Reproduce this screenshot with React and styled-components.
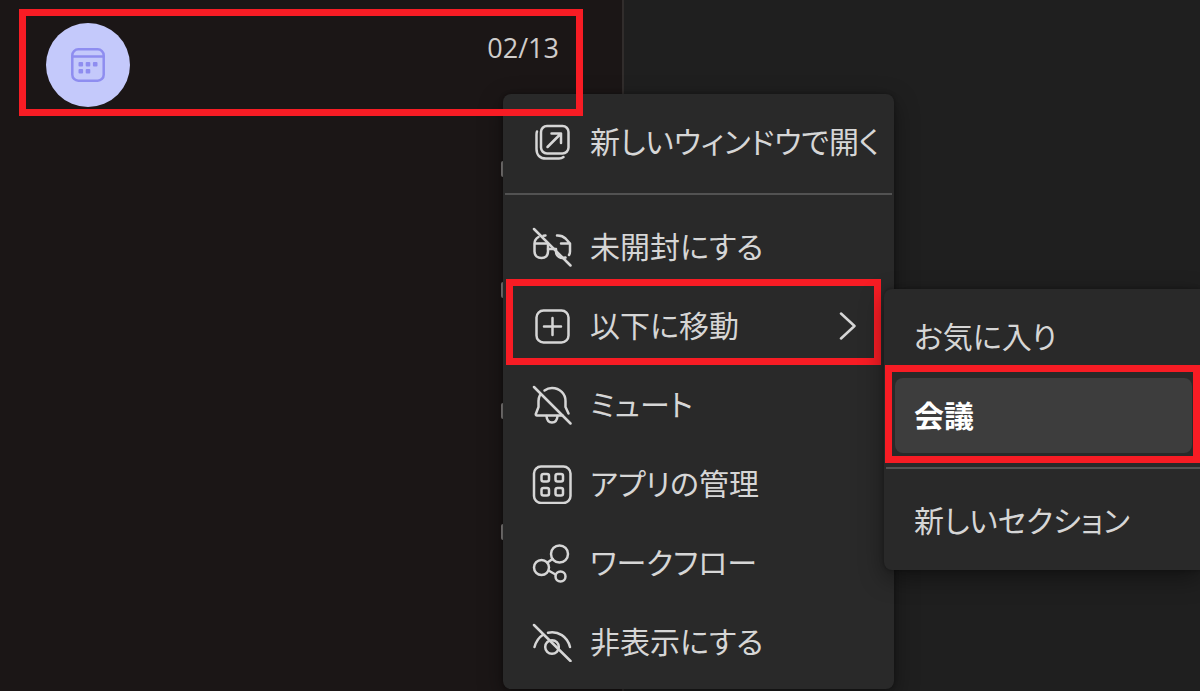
import React from 'react'
import styled, { createGlobalStyle } from 'styled-components'

const GlobalStyle = createGlobalStyle`
    * {
        box-sizing: border-box;
    }

    body {
        margin: 0;
        background-color: #1f1f1f;
        color: #d6d6d6;
        font-family: 'Noto Sans CJK JP', 'Noto Sans', sans-serif;
        font-feature-settings: 'palt';
        overflow: hidden;
    }
`

const Page = styled.main`
    position: relative;
    display: flex;
    min-height: 100vh;
`

const ChatPane = styled.section`
    width: 52%;
    padding: 9px 39px 0 19px;
    background-color: #1b1616;
    border-right: 2px solid #312d2c;
`

const ChatRow = styled.article`
    position: relative;
    z-index: 3;
    display: flex;
    justify-content: space-between;
    height: 107px;
    padding: 7px 17px 0 20px;
    border: 7px solid #f71c24;
    pointer-events: none;
`

const Avatar = styled.div`
    display: flex;
    align-items: center;
    justify-content: center;
    width: 84px;
    height: 84px;
    border-radius: 50%;
    background-color: #c4c9fb;
    color: #8e8df0;
`

const ChatDate = styled.time`
    margin-top: 7px;
    font-family: 'Open Sans', 'Noto Sans', sans-serif;
    font-size: 27px;
    line-height: 36px;
    color: #cfcccb;
`

const HiddenRows = styled.div`
    display: flex;
    flex-direction: column;
    gap: 105px;
    padding: 45px 0 0 482px;
`

const RowEdge = styled.span`
    width: 4px;
    height: 16px;
    border-radius: 2px;
    background-color: #8a8786;
`

const MenuList = styled.ul`
    margin: 0;
    list-style: none;
    background-color: #292929;
    box-shadow: 0 8px 24px rgba(0, 0, 0, 0.4), 0 0 4px rgba(0, 0, 0, 0.3);
`

const ContextMenu = styled(MenuList)`
    position: absolute;
    top: 94px;
    left: 503px;
    z-index: 2;
    width: 391px;
    padding: 8px 0;
    border-radius: 8px;
`

const SubMenu = styled(MenuList)`
    position: absolute;
    top: 3px;
    left: 381px;
    width: 316px;
    padding: 10px 0 12px;
    border-radius: 8px 0 0 8px;
`

const MenuEntry = styled.li`
    position: relative;
`

const Frame = styled.span`
    position: absolute;
    inset: ${props => props.$inset};
    border: 7px solid #f71c24;
    pointer-events: none;
`

const MenuButton = styled.button`
    display: flex;
    align-items: center;
    gap: 18px;
    width: 100%;
    height: 79px;
    padding: 0 24px 0 29px;
    border: 0;
    background: none;
    color: inherit;
    font: inherit;
    font-feature-settings: inherit;
    font-size: 30px;
    line-height: 40px;
    text-align: left;
    white-space: nowrap;
    cursor: pointer;
`

const MenuLabel = styled.span`
    flex: 1;
    padding-bottom: 4px;
`

const Chevron = styled.span`
    display: flex;
    padding-right: 13px;
`

const SubEntry = styled.li`
    position: relative;
    margin: 0 8px 4px 11px;

    &:last-child {
        margin-bottom: 0;
    }
`

const SubButton = styled(MenuButton)`
    height: 75px;
    padding: 0 19px;
    border-radius: 8px;
    background-color: ${props => props.$active ? '#3d3d3d' : 'transparent'};
    color: ${props => props.$active ? '#ffffff' : 'inherit'};
    font-weight: ${props => props.$active ? 700 : 400};
`

const Separator = styled.li`
    height: 2px;
    margin: ${props => props.$margin};
    background-color: #525252;
`

const Icon = styled.svg`
    flex: none;
    fill: none;
    stroke: currentColor;
    stroke-width: 2.5;
    stroke-linecap: round;
    stroke-linejoin: round;
`

const CalendarIcon = () => (
    <Icon width="34" height="34" viewBox="0 0 34 34" aria-hidden="true">
        <rect x="1.3" y="1.3" width="31.4" height="31.4" rx="6" />
        <path d="M1.5 8.5H32.5" />
        <g fill="currentColor" stroke="none">
            <rect x="7.5" y="14" width="4.6" height="4.6" rx="1" />
            <rect x="14.7" y="14" width="4.6" height="4.6" rx="1" />
            <rect x="21.9" y="14" width="4.6" height="4.6" rx="1" />
            <rect x="7.5" y="21" width="4.6" height="4.6" rx="1" />
            <rect x="14.7" y="21" width="4.6" height="4.6" rx="1" />
        </g>
    </Icon>
)

const icons = {
    open: (
        <>
            <rect x="9" y="4" width="27.5" height="27.5" rx="6" />
            <path d="M5 9.5C4.6 10.5 4.5 11.5 4.5 13V27C4.5 33 8 36.5 14 36.5H27C28.8 36.5 30.2 36 31.5 35" />
            <path d="M15.5 25L29 11.5M19.5 11.5H29V21" />
        </>
    ),
    unread: (
        <>
            <path d="M2.5 16.5H16V24.5C16 28.5 13.5 31 9.5 31S2.5 28.5 2.5 24.5V16.5C2.5 13.5 4 11.5 6.5 10M11.5 8.7L13.5 8.5" />
            <path d="M25 8.5C29 8.3 31.5 9.5 33.5 11.5L38 16.5H29M38 16.5V24.5C38 26 37.7 27 37 28M33.5 30.5C28.5 32 24 29.5 24 24.5V22H16" />
            <path d="M2 2L38.5 38.5" />
        </>
    ),
    move: (
        <>
            <rect x="4.5" y="4.5" width="32" height="32" rx="7" />
            <path d="M20.5 12V29M12 20.5H29" />
        </>
    ),
    mute: (
        <>
            <path d="M12.5 5.5C14.5 4 17 3 20 3C28 3 33.5 9 33.5 16V22L36.5 28.5" />
            <path d="M8 10C7 12 6.5 14 6.5 16V22L3.8 29C3.6 29.8 4 30.5 5 30.5H30.5" />
            <path d="M14.5 31C14.8 35 17 37.5 20 37.5S25.2 35 25.5 31" />
            <path d="M2 2L38.5 38.5" />
        </>
    ),
    apps: (
        <>
            <rect x="2" y="2.5" width="36.5" height="36.5" rx="7" />
            <rect x="9.5" y="10" width="7.5" height="7.5" rx="2" />
            <rect x="23.5" y="10" width="7.5" height="7.5" rx="2" />
            <rect x="9.5" y="24" width="7.5" height="7.5" rx="2" />
            <rect x="23.5" y="24" width="7.5" height="7.5" rx="2" />
        </>
    ),
    workflow: (
        <>
            <circle cx="27.5" cy="11" r="8.5" />
            <circle cx="9.5" cy="24.5" r="7.5" />
            <circle cx="28.5" cy="33.5" r="5" />
            <path d="M15.5 19.5L20.5 16M16.5 27.5L23.5 31.5" />
        </>
    ),
    hide: (
        <>
            <path d="M2.5 25C4 19.5 7 15.2 11 12.7M16 10.7C26 8.5 35.5 14.5 38 25" />
            <circle cx="20" cy="25" r="6.8" />
            <path d="M2 3L38.5 39" />
        </>
    ),
}

const menuItems = [
    { icon: 'open', label: '新しいウィンドウで開く' },
    { icon: 'unread', label: '未開封にする' },
    { icon: 'move', label: '以下に移動', hasSub: true },
    { icon: 'mute', label: 'ミュート' },
    { icon: 'apps', label: 'アプリの管理' },
    { icon: 'workflow', label: 'ワークフロー' },
    { icon: 'hide', label: '非表示にする' },
]

function MoveSubMenu() {
    return (
        <SubMenu>
            <SubEntry>
                <SubButton type="button">
                    <MenuLabel>お気に入り</MenuLabel>
                </SubButton>
            </SubEntry>
            <SubEntry>
                <SubButton type="button" $active>
                    <MenuLabel>会議</MenuLabel>
                </SubButton>
                <Frame $inset="-13px -8px -10px -10px" />
            </SubEntry>
            <Separator $margin="14px 0 14px 2px" />
            <SubEntry>
                <SubButton type="button">
                    <MenuLabel>新しいセクション</MenuLabel>
                </SubButton>
            </SubEntry>
        </SubMenu>
    )
}

function App() {
    return (
        <Page>
            <GlobalStyle />
            <ChatPane>
                <ChatRow>
                    <Avatar><CalendarIcon /></Avatar>
                    <ChatDate>02/13</ChatDate>
                </ChatRow>
                <HiddenRows>
                    {[1, 2, 3, 4].map(n => <RowEdge key={n} />)}
                </HiddenRows>
            </ChatPane>
            <ContextMenu>
                {menuItems.map(item => (
                    <React.Fragment key={item.icon}>
                        <MenuEntry>
                            <MenuButton type="button">
                                <Icon width="40" height="40" viewBox="0 0 40 40" aria-hidden="true">
                                    {icons[item.icon]}
                                </Icon>
                                <MenuLabel>{item.label}</MenuLabel>
                                {item.hasSub && (
                                    <Chevron>
                                        <Icon width="18" height="28" viewBox="0 0 18 28" aria-hidden="true">
                                            <path d="M2 1.5L15.5 14L2 26.5" />
                                        </Icon>
                                    </Chevron>
                                )}
                            </MenuButton>
                            {item.hasSub && <Frame $inset="-7px 13px 0 3px" />}
                            {item.hasSub && <MoveSubMenu />}
                        </MenuEntry>
                        {item.icon === 'open' && <Separator $margin="12px 2px" />}
                    </React.Fragment>
                ))}
            </ContextMenu>
        </Page>
    )
}

export default App
